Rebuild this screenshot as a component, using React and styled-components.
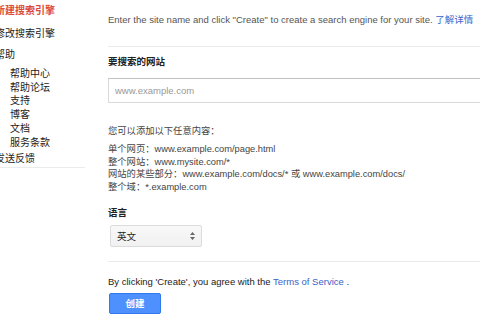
import React from "react";
import styled, { createGlobalStyle } from "styled-components";

const Global = createGlobalStyle`
  html, body { margin: 0; padding: 0; background: #fff; overflow: hidden; }
  body { font-family: "Liberation Sans", Arial, "Noto Sans CJK SC", sans-serif; }
`;

const Page = styled.div`
  display: flex;
  width: 480px;
  height: 320px;
  overflow: hidden;
`;

const Sidebar = styled.nav`
  flex: 0 0 100px;
  margin-left: -5px;
  display: flex;
  flex-direction: column;
  align-items: flex-start;
  padding-top: 3px;
  font-family: "Noto Sans CJK SC", sans-serif;
  font-size: 10px;
`;

const NavItem = styled.div`
  color: ${(p) => (p.$active ? "#dd4b39" : "#222")};
  font-weight: ${(p) => (p.$active ? 700 : 400)};
  line-height: 13px;
  margin-top: ${(p) => p.$mt || 0}px;
`;

const SubList = styled.div`
  display: flex;
  flex-direction: column;
  padding-left: 15px;
  margin-top: 6px;
`;

const SubItem = styled.div`
  color: #222;
  line-height: 13.7px;
`;

const SideRule = styled.div`
  align-self: stretch;
  margin-left: 5px;
  width: 85px;
  height: 1px;
  background: #ebebeb;
  margin-top: 3px;
`;

const Main = styled.main`
  flex: 0 0 400px;
  margin-left: 13px;
  display: flex;
  flex-direction: column;
  align-items: flex-start;
  font-size: 9.5px;
  color: #555;
`;

const Intro = styled.p`
  margin: 13px 0 0;
  line-height: 13px;
  white-space: nowrap;
`;

const Link = styled.a`
  color: #3a62c9;
  text-decoration: none;
  font-family: "Noto Sans CJK SC", sans-serif;
`;

const Rule = styled.div`
  align-self: stretch;
  height: 1px;
  background: #ebebeb;
  margin-top: ${(p) => p.$mt}px;
`;

const Label = styled.div`
  font-family: "Noto Sans CJK SC", sans-serif;
  font-weight: 700;
  font-size: 9.5px;
  color: #222;
  line-height: 13px;
  margin-top: ${(p) => p.$mt}px;
`;

const Input = styled.input`
  box-sizing: border-box;
  align-self: stretch;
  height: 25px;
  margin: 10px 0 0;
  padding: 0 6px;
  border: 1px solid #d9d9d9;
  border-top-color: #c0c0c0;
  font-family: "Liberation Sans", Arial, sans-serif;
  font-size: 9.5px;
  color: #222;
  outline: none;
  &::placeholder { color: #999; }
`;

const Help = styled.div`
  margin-top: 22px;
  font-family: "Liberation Sans", Arial, "Noto Sans CJK SC", sans-serif;
  font-size: 9.3px;
  color: #444;
`;

const HelpHead = styled.div`
  line-height: 13px;
  margin-bottom: 5px;
`;

const HelpLine = styled.div`
  line-height: 12.7px;
  white-space: nowrap;
`;

const SelectBox = styled.div`
  box-sizing: border-box;
  margin: 6px 0 0 2px;
  width: 92px;
  height: 22px;
  display: flex;
  align-items: center;
  justify-content: space-between;
  padding: 0 6px 0 6px;
  border: 1px solid #dcdcdc;
  border-radius: 2px;
  background: linear-gradient(#f8f8f8, #f1f1f1);
  font-family: "Noto Sans CJK SC", sans-serif;
  font-size: 9.5px;
  color: #222;
`;

const Terms = styled.p`
  margin: 13px 0 0;
  line-height: 13px;
  color: #222;
  white-space: nowrap;
`;

const TermsLink = styled.a`
  color: #3a62c9;
  text-decoration: none;
`;

const Button = styled.button`
  box-sizing: border-box;
  margin-top: 5px;
  margin-left: 1px;
  width: 52px;
  height: 21px;
  border: 1px solid #3079ed;
  border-radius: 2px;
  background: #4d90fe;
  color: #fff;
  font-family: "Noto Sans CJK SC", sans-serif;
  font-weight: 700;
  font-size: 9.5px;
  padding: 0;
`;

const Arrows = () => (
  <svg width="5" height="8" viewBox="0 0 5 8">
    <path d="M0 3 L2.5 0 L5 3 Z M0 5 L2.5 8 L5 5 Z" fill="#666" />
  </svg>
);

export default function App() {
  return (
    <>
      <Global />
      <Page>
        <Sidebar>
          <NavItem $active>新建搜索引擎</NavItem>
          <NavItem $mt={10}>修改搜索引擎</NavItem>
          <NavItem $mt={8}>帮助</NavItem>
          <SubList>
            <SubItem>帮助中心</SubItem>
            <SubItem>帮助论坛</SubItem>
            <SubItem>支持</SubItem>
            <SubItem>博客</SubItem>
            <SubItem>文档</SubItem>
            <SubItem>服务条款</SubItem>
          </SubList>
          <NavItem $mt={3}>发送反馈</NavItem>
          <SideRule />
        </Sidebar>
        <Main>
          <Intro>
            Enter the site name and click "Create" to create a search engine for your site.{" "}
            <Link href="#">了解详情</Link>
          </Intro>
          <Rule $mt={20} />
          <Label $mt={8}>要搜索的网站</Label>
          <Input placeholder="www.example.com" />
          <Help>
            <HelpHead>您可以添加以下任意内容：</HelpHead>
            <HelpLine>单个网页：www.example.com/page.html</HelpLine>
            <HelpLine>整个网站：www.mysite.com/*</HelpLine>
            <HelpLine>网站的某些部分：www.example.com/docs/* 或 www.example.com/docs/</HelpLine>
            <HelpLine>整个域：*.example.com</HelpLine>
          </Help>
          <Label $mt={12}>语言</Label>
          <SelectBox>
            <span>英文</span>
            <Arrows />
          </SelectBox>
          <Rule $mt={14} />
          <Terms>
            By clicking 'Create', you agree with the <TermsLink href="#">Terms of Service</TermsLink> .
          </Terms>
          <Button>创建</Button>
        </Main>
      </Page>
    </>
  );
}
